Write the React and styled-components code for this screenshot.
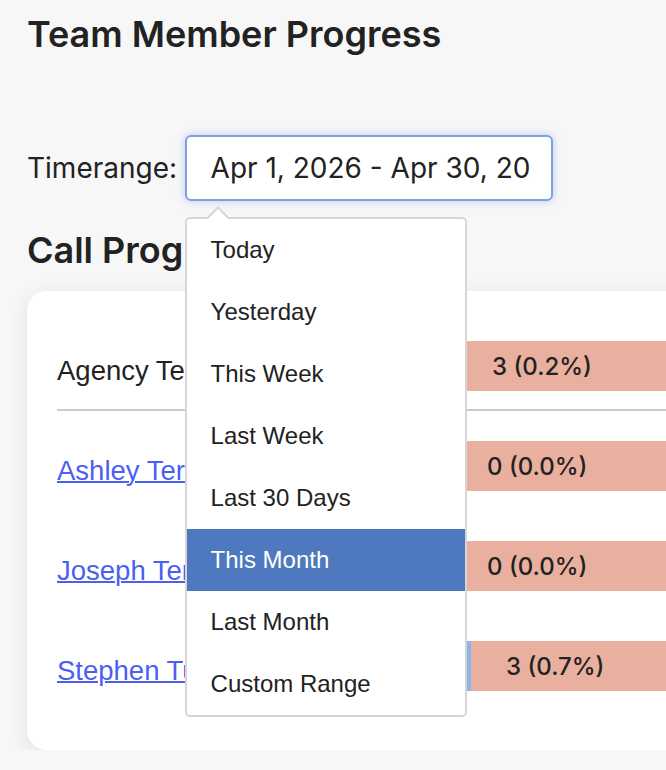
import React from "react";
import styled, { createGlobalStyle } from "styled-components";

const Global = createGlobalStyle`
  html, body { margin: 0; padding: 0; background: #f7f7f8; overflow: hidden; }
  body { font-family: Inter, "Noto Sans", sans-serif; color: #222; }
`;

const Page = styled.div`
  padding: 12px 0 0 27px;
  width: 900px;
`;

const Title = styled.h1`
  margin: 0;
  font-size: 36px;
  font-weight: 600;
  line-height: 44px;
  color: #222;
`;

const RangeRow = styled.div`
  display: flex;
  align-items: center;
  gap: 7.5px;
  margin-top: 79px;
`;

const Label = styled.span`
  font-size: 28px;
  color: #222;
`;

const Picker = styled.div`
  position: relative;
`;

const Input = styled.div`
  box-sizing: border-box;
  width: 368px;
  height: 66px;
  border: 2px solid #7f9fe0;
  border-radius: 6px;
  background: #fff;
  box-shadow: 0 0 8px rgba(102, 140, 230, 0.45);
  padding: 0 19px 0 24px;
  display: flex;
  align-items: center;
`;

const InputText = styled.span`
  flex: 1;
  overflow: hidden;
  white-space: nowrap;
  font-size: 28px;
  color: #222;
`;

const Menu = styled.ul`
  position: absolute;
  top: 82px;
  left: 0;
  z-index: 10;
  box-sizing: border-box;
  width: 282px;
  margin: 0;
  padding: 0;
  list-style: none;
  background: #fff;
  border: 2px solid #d6d6d6;
  border-radius: 5px;
  &::before {
    content: "";
    position: absolute;
    top: -13px;
    left: 18px;
    border-left: 13px solid transparent;
    border-right: 13px solid transparent;
    border-bottom: 13px solid #d6d6d6;
  }
  &::after {
    content: "";
    position: absolute;
    top: -10px;
    left: 20px;
    border-left: 11px solid transparent;
    border-right: 11px solid transparent;
    border-bottom: 11px solid #fff;
  }
`;

const Item = styled.li`
  height: 62px;
  display: flex;
  align-items: center;
  padding-left: 24px;
  font-family: "Liberation Sans", Arial, sans-serif;
  font-size: 24px;
  color: ${(p) => (p.$active ? "#fff" : "#222")};
  background: ${(p) => (p.$active ? "#4e79be" : "transparent")};
`;

const Subtitle = styled.h2`
  margin: 27px 0 0;
  font-size: 36px;
  font-weight: 600;
  line-height: 44px;
  color: #222;
`;

const Card = styled.div`
  margin-top: 19px;
  background: #fff;
  border-radius: 20px;
  box-shadow: 0 5px 22px rgba(0, 0, 0, 0.09);
  padding: 50px 0 39px 30px;
`;

const Row = styled.div`
  display: grid;
  grid-template-columns: 363px 1fr;
  align-items: center;
  padding: ${(p) => (p.$head ? "0 0 18px" : "30px 0 20px")};
  border-bottom: ${(p) => (p.$head ? "2px solid #cbcbcb" : "none")};
`;

const Name = styled.span`
  padding-top: 9px;
  font-family: "Liberation Sans", Arial, sans-serif;
  font-size: 27.5px;
  color: #222;
  white-space: nowrap;
`;

const NameLink = styled.a`
  padding-top: 9px;
  font-family: "Liberation Sans", Arial, sans-serif;
  font-size: 27.5px;
  color: #4b5ff4;
  text-decoration: underline;
  text-decoration-thickness: 2px;
  white-space: nowrap;
`;

const Bar = styled.div`
  display: flex;
  height: 50px;
`;

const Connected = styled.div`
  width: ${(p) => p.$w}px;
  background: #8ab6ec;
`;

const Missed = styled.div`
  flex: 1;
  background: #e9b09f;
  display: flex;
  align-items: center;
  padding-left: ${(p) => p.$indent}px;
  font-size: 24px;
  font-weight: 500;
  color: #222;
`;

const options = [
  "Today",
  "Yesterday",
  "This Week",
  "Last Week",
  "Last 30 Days",
  "This Month",
  "Last Month",
  "Custom Range",
];

const rows = [
  { name: "Ashley Terry", value: "0 (0.0%)", connected: 0, indent: 67 },
  { name: "Joseph Terrell", value: "0 (0.0%)", connected: 0, indent: 67 },
  { name: "Stephen Turner", value: "3 (0.7%)", connected: 51, indent: 35 },
];

export default function App() {
  return (
    <>
      <Global />
      <Page>
        <Title>Team Member Progress</Title>
        <RangeRow>
          <Label>Timerange:</Label>
          <Picker>
            <Input>
              <InputText>Apr 1, 2026 - Apr 30, 2026</InputText>
            </Input>
            <Menu>
              {options.map((o) => (
                <Item key={o} $active={o === "This Month"}>
                  {o}
                </Item>
              ))}
            </Menu>
          </Picker>
        </RangeRow>
        <Subtitle>Call Progress</Subtitle>
        <Card>
          <Row $head>
            <Name>Agency Team</Name>
            <Bar>
              <Missed $indent={72}>3 (0.2%)</Missed>
            </Bar>
          </Row>
          {rows.map((r) => (
            <Row key={r.name}>
              <NameLink href="#">{r.name}</NameLink>
              <Bar>
                {r.connected > 0 && <Connected $w={r.connected} />}
                <Missed $indent={r.indent}>{r.value}</Missed>
              </Bar>
            </Row>
          ))}
        </Card>
      </Page>
    </>
  );
}
